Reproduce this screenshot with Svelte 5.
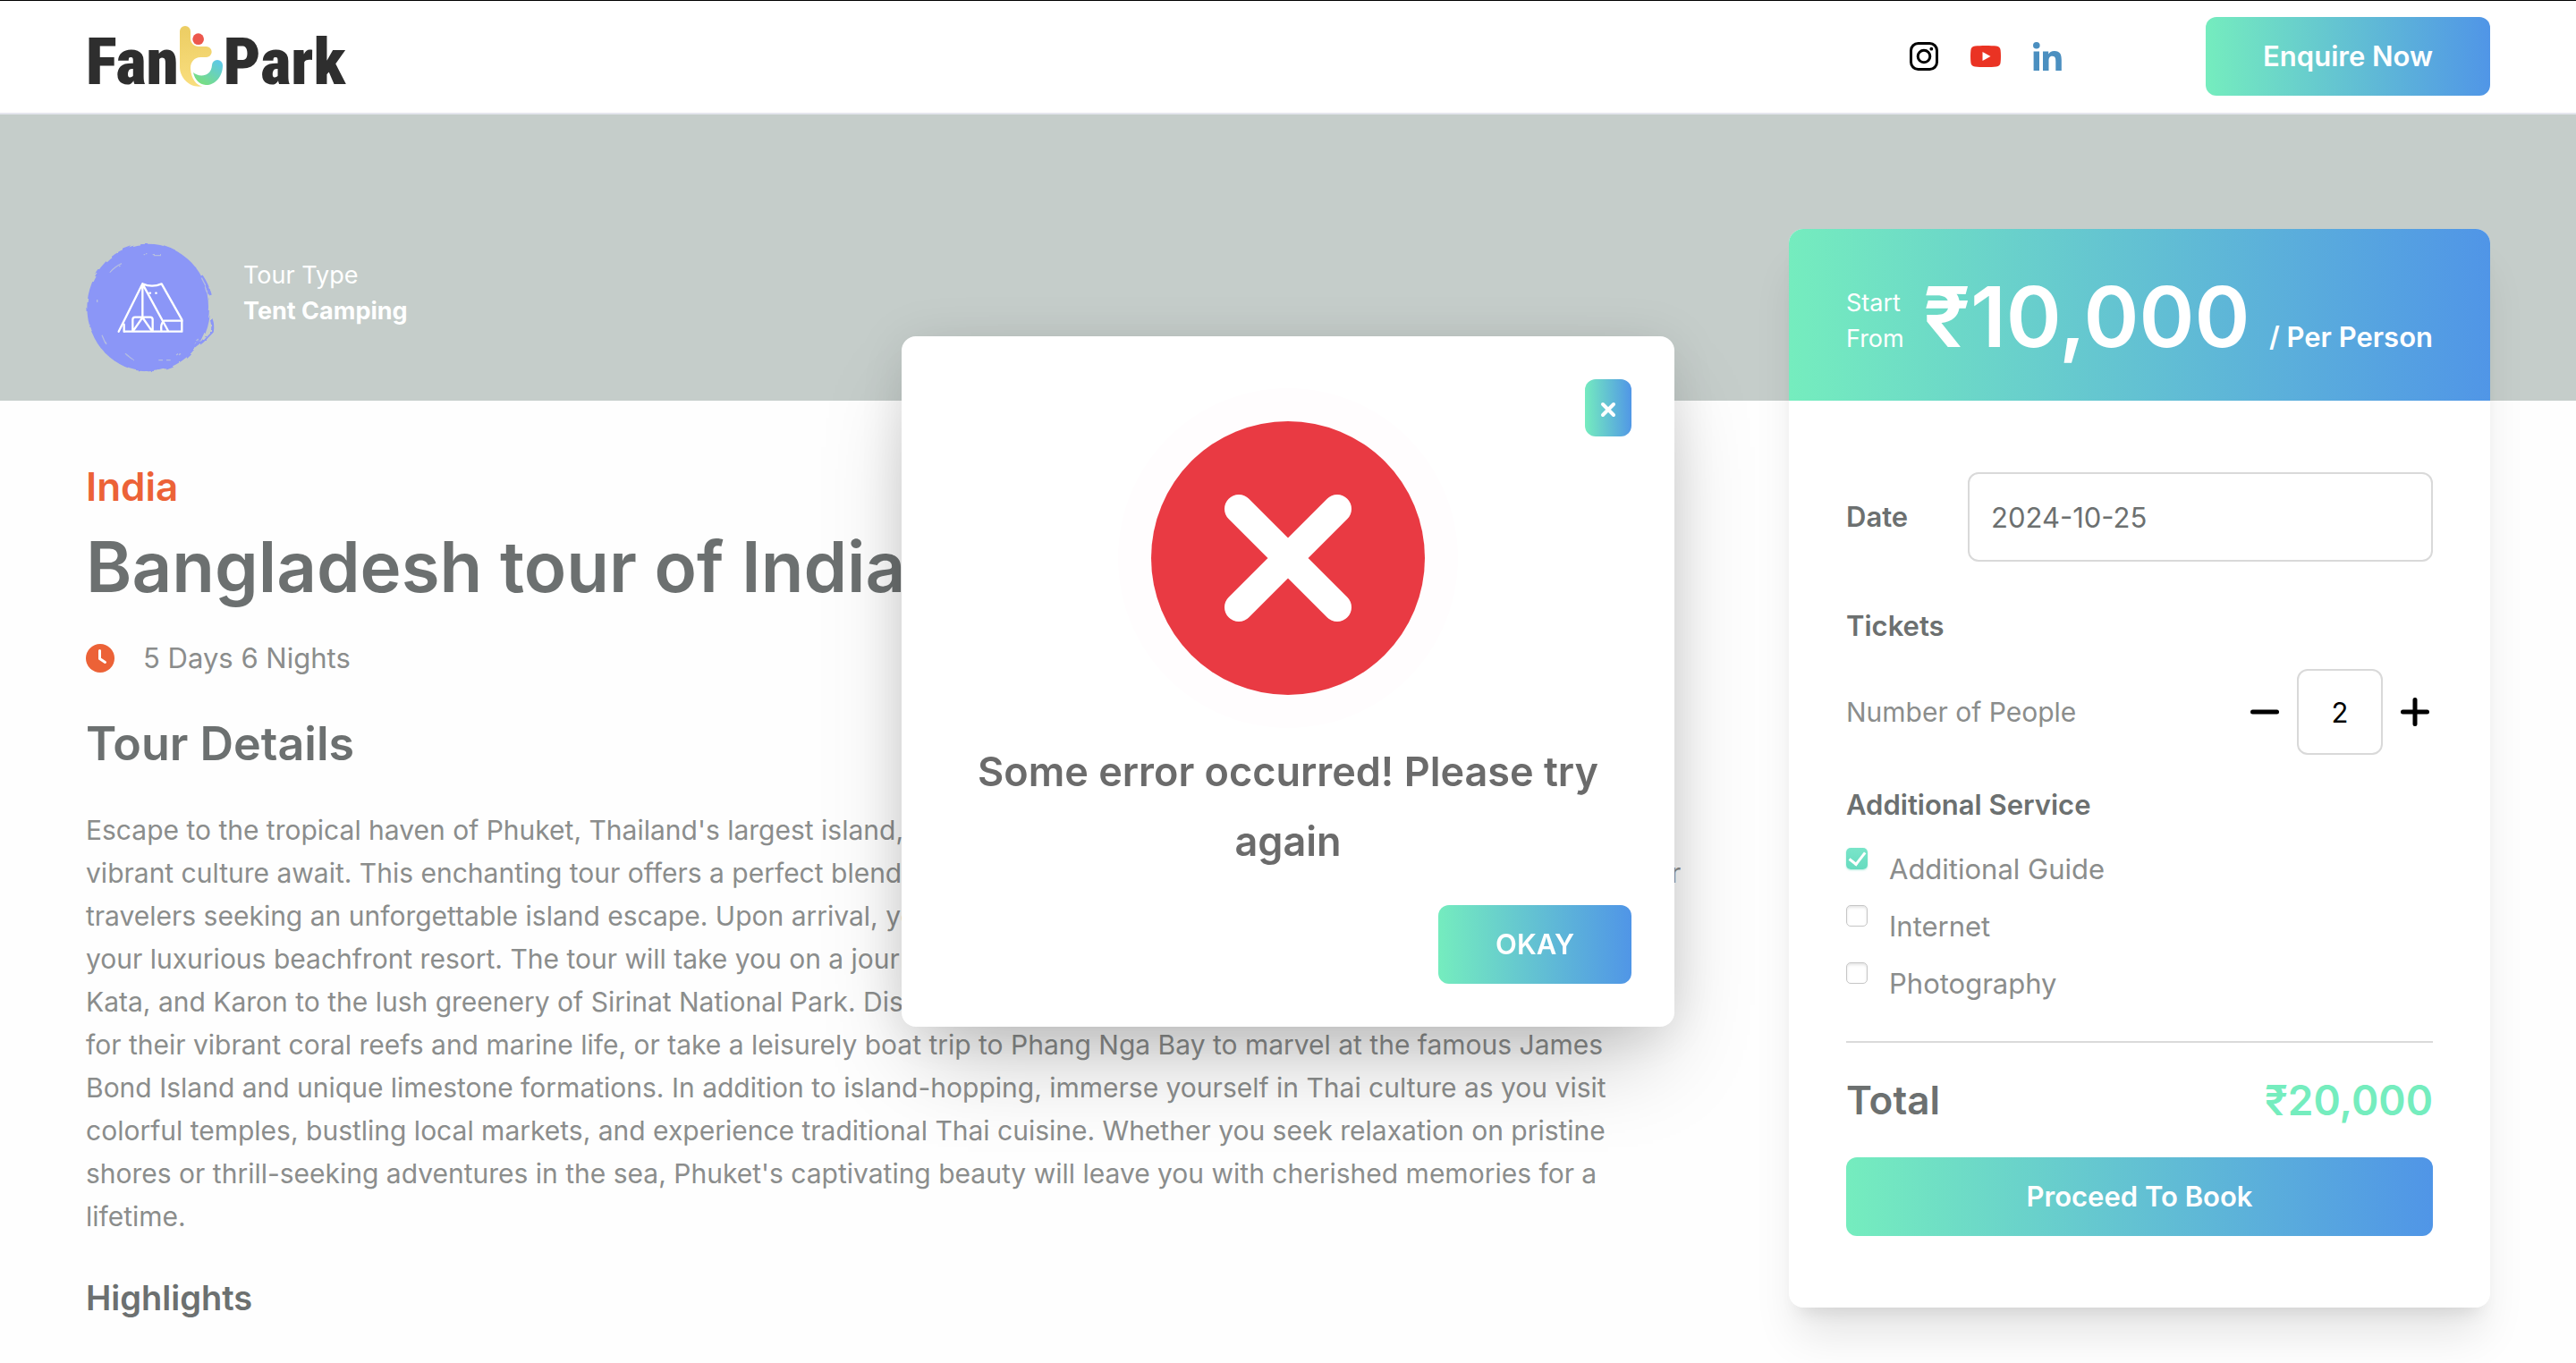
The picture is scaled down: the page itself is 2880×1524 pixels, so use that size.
<script>
  let open = $state(true);
  let date = $state('2024-10-25');
  let people = $state(2);
  let services = $state([
    { id: 'guide', name: 'Additional Guide', checked: true },
    { id: 'internet', name: 'Internet', checked: false },
    { id: 'photo', name: 'Photography', checked: false }
  ]);

  const price = 10000;
  let total = $derived('₹' + (price * Number(people)).toLocaleString('en-US'));

  const details = [
    "Escape to the tropical haven of Phuket, Thailand's largest island, where pristine beaches, clear waters, and",
    'vibrant culture await. This enchanting tour offers a perfect blend of relaxation with adventures, making it the ideal getaway for',
    "travelers seeking an unforgettable island escape. Upon arrival, you'll be warmly welcomed and transferred to",
    'your luxurious beachfront resort. The tour will take you on a journey from the sandy beaches of Patong,',
    'Kata, and Karon to the lush greenery of Sirinat National Park. Discover the nearby Phi Phi Islands, known',
    'for their vibrant coral reefs and marine life, or take a leisurely boat trip to Phang Nga Bay to marvel at the famous James',
    'Bond Island and unique limestone formations. In addition to island-hopping, immerse yourself in Thai culture as you visit',
    'colorful temples, bustling local markets, and experience traditional Thai cuisine. Whether you seek relaxation on pristine',
    "shores or thrill-seeking adventures in the sea, Phuket's captivating beauty will leave you with cherished memories for a",
    'lifetime.'
  ].join('\n');
</script>

<header class="topbar">
  <a class="logo" href="/" aria-label="FanTPark home">
    <span>Fan</span>
    <svg viewBox="420 84 150 210" width="50" height="70" aria-hidden="true">
      <defs>
        <linearGradient id="sun" x1="0" y1="0" x2="0" y2="1">
          <stop offset="0" stop-color="#eccd63" />
          <stop offset="1" stop-color="#f9de7e" />
        </linearGradient>
        <linearGradient id="sea" x1="1" y1="0" x2="0.2" y2="1">
          <stop offset="0" stop-color="#5ac6f2" />
          <stop offset="1" stop-color="#7be079" />
        </linearGradient>
      </defs>
      <path fill="url(#sun)" d="M423 105a18 18 0 0 1 36 0V130C460 146 471 156 486 156H512a18 18 0 0 1 0 36H492C472 193 458 208 459 230C461 262 478 287 499 289C458 297 423 262 423 225Z" />
      <circle cx="485" cy="131" r="19" fill="#ec574c" />
      <path fill="url(#sea)" d="M468 243C488 261 528 258 531 219a18 18 0 0 1 36 0C567 262 536 287 510 285C489 283 473 267 468 243Z" />
    </svg>
    <span>Park</span>
  </a>

  <nav class="social" aria-label="Social links">
    <a href="#instagram" aria-label="Instagram">
      <svg viewBox="0 0 32 32" width="32" height="32" fill="none" stroke="#000">
        <rect x="1.5" y="1.5" width="29" height="29" rx="8" stroke-width="3" />
        <circle cx="16" cy="16" r="6.8" stroke-width="3" />
        <circle cx="24.3" cy="7.7" r="1.9" fill="#000" stroke="none" />
      </svg>
    </a>
    <a href="#youtube" aria-label="YouTube">
      <svg viewBox="0 0 34 24" width="34" height="24">
        <path fill="#ea3323" d="M5 .6C11 -.2 23 -.2 29 .6C32 1 33.300 2.600 33.600 5C34.100 9 34.100 15 33.600 19C33.300 21.400 32 23 29 23.400C23 24.200 11 24.200 5 23.400C2 23 .7 21.400 .4 19C-.1 15 -.1 9 .4 5C.7 2.600 2 1 5 .6Z" />
        <path fill="#fff" d="M13.500 7v10l9-5z" />
      </svg>
    </a>
    <a href="#linkedin" aria-label="LinkedIn">
      <svg viewBox="0 0 32 32" width="32" height="32" fill="#4b8fc0">
        <circle cx="3.800" cy="3.800" r="3.800" />
        <path d="M.6 10.600H7V32H.6ZM11 10.600h6.200v3c1-1.900 3.300-3.500 6.600-3.500 6.600 0 8 4.200 8 10V32h-6.500V21.600c0-2.600-.1-5.800-3.700-5.800-3.600 0-4.100 2.700-4.100 5.600V32H11Z" />
      </svg>
    </a>
  </nav>
  <button class="btn">Enquire Now</button>
</header>

<section class="banner">
  <svg class="badge" viewBox="108 96 432 432" width="144" height="144" aria-hidden="true">
    <filter id="rough" x="-5%" y="-5%" width="110%" height="110%">
      <feTurbulence type="fractalNoise" baseFrequency="0.03" numOctaves="3" seed="4" />
      <feDisplacementMap in="SourceGraphic" scale="12" />
    </filter>
    <g filter="url(#rough)">
      <ellipse cx="317" cy="312" rx="205" ry="214" fill="#8b96f7" />
      <path d="M496 205Q516 235 526 270M528 350Q536 370 532 392L500 425L474 445" fill="none" stroke="#8b96f7" stroke-width="9" />
      <path d="M188 194Q206 174 228 164M302 134H316M332 134H360M240 466L266 486M352 488H366M378 488H392M414 474L426 466M146 285V294M162 404L174 432M496 212Q510 234 516 262M474 434L488 420" fill="none" stroke="#b4bde0" stroke-width="4" />
    </g>
    <g fill="none" stroke="#fff" stroke-width="7" stroke-linecap="round" stroke-linejoin="round">
      <path d="M298 232L218 392M298 232Q330 246 362 232L430 352V392H238M298 232L384 390M298 232V345" />
      <path d="M370 356H430M370 356Q358 366 361 390M236 368V392M265 390V352Q265 344 273 344H324Q332 344 332 352V390M298 345L268 388M298 345L328 388" />
      <path d="M322 263h2M343 263h1" />
    </g>
  </svg>
  <div class="tour-type">
    <span>Tour Type</span>
    <strong>Tent Camping</strong>
  </div>
</section>

<main class="content">
  <article class="tour">
    <p class="country">India</p>
    <h1>Bangladesh tour of India</h1>
    <p class="duration">
      <svg viewBox="0 0 32 32" width="32" height="32" aria-hidden="true">
        <circle cx="16" cy="16" r="16" fill="#ec6237" />
        <path d="M15.500 7.500V16.500L21.500 20.500" fill="none" stroke="#fff" stroke-width="3" stroke-linecap="round" stroke-linejoin="round" />
      </svg>
      5 Days 6 Nights
    </p>
    <h2>Tour Details</h2>
    <p class="details">{details}</p>
    <h3>Highlights</h3>
  </article>

  <aside class="card">
    <div class="card-head">
      <span class="from">Start<br />From</span>
      <span class="price">₹10,000</span>
      <span class="per">/ Per Person</span>
    </div>
    <form class="card-body" onsubmit={(e) => e.preventDefault()}>
      <div class="date-row">
        <label for="date">Date</label>
        <input id="date" type="text" bind:value={date} />
      </div>

      <h4>Tickets</h4>
      <div class="people-row">
        <label for="people">Number of People</label>
        <div class="stepper">
          <button type="button" aria-label="Fewer people" onclick={() => (people = Math.max(1, people - 1))}>
            <svg viewBox="0 0 32 32" width="32" height="32"><path d="M2.500 16H29.500" /></svg>
          </button>
          <input id="people" type="text" inputmode="numeric" bind:value={people} />
          <button type="button" aria-label="More people" onclick={() => (people = Number(people) + 1)}>
            <svg viewBox="0 0 32 32" width="32" height="32"><path d="M2.500 16H29.500M16 2.500V29.500" /></svg>
          </button>
        </div>
      </div>

      <h4 class="services-title">Additional Service</h4>
      <div class="services">
        {#each services as s (s.id)}
          <div class="service">
            <input id={s.id} type="checkbox" bind:checked={s.checked} />
            <label for={s.id}>{s.name}</label>
          </div>
        {/each}
      </div>

      <div class="total">
        <span>Total</span>
        <span class="sum">{total}</span>
      </div>
      <button class="btn wide">Proceed To Book</button>
    </form>
  </aside>
</main>

{#if open}
  <div class="overlay">
    <div class="modal" role="alertdialog" aria-modal="true" aria-labelledby="modal-text">
      <button class="close" aria-label="Close" onclick={() => (open = false)}>
        <svg viewBox="0 0 18 18" width="18" height="18"><path d="M3 3L15 15M15 3L3 15" /></svg>
      </button>
      <svg class="error" viewBox="0 0 380 380" width="380" height="380" aria-hidden="true">
        <circle cx="190" cy="190" r="190" fill="#fffdfe" />
        <circle cx="190" cy="190" r="153" fill="#e93a43" />
        <path d="M135 135L245 245M245 135L135 245" stroke="#fff" stroke-width="32" stroke-linecap="round" />
      </svg>
      <p id="modal-text">Some error occurred! Please try again</p>
      <button class="btn okay" onclick={() => (open = false)}>OKAY</button>
    </div>
  </div>
{/if}

<style>
  :global(body) {
    min-height: 100vh;
    margin: 0;
    background: #fefefe;
    color: #8b8d8c;
    font: 400 30px/48px Inter, "Liberation Sans", sans-serif;
  }
  :global(*) { box-sizing: border-box; }
  h1, h2, h3, h4, p { margin: 0; }
  h1, h2, h3, h4 { color: #6c7070; font-weight: 600; }
  svg { display: block; flex: none; }
  button, input { font: inherit; margin: 0; }
  button { border: 0; padding: 0; background: none; cursor: pointer; }

  .btn {
    height: 88px;
    padding: 0 64px;
    border-radius: 12px;
    background: linear-gradient(88deg, #75edbe, #5095e7);
    color: #fff;
    font-size: 31px;
    font-weight: 600;
  }

  .topbar {
    display: flex;
    align-items: center;
    height: 128px;
    padding: 0 96px;
    border-bottom: 2px solid #e5e6ee;
    background: #fff;
    box-shadow: inset 0 1px #000;
  }
  .logo {
    display: flex;
    align-items: center;
    margin-right: auto;
    color: #2e2e2e;
    text-decoration: none;
    font: 900 73px/78px "Roboto Condensed", Roboto, sans-serif;
  }
  .logo span { padding-top: 12px; }
  .social { display: flex; align-items: center; gap: 36px; margin-right: 161px; }

  .banner {
    display: flex;
    gap: 32px;
    height: 320px;
    padding: 144px 96px 0;
    background: #c5cdca;
    color: #fff;
  }
  .tour-type {
    display: flex;
    flex-direction: column;
    padding-top: 16px;
    font-size: 27px;
    line-height: 40px;
  }
  .tour-type strong { font-weight: 700; }

  .content {
    display: grid;
    grid-template-columns: 17fr 7fr;
    align-items: start;
    padding: 0 96px 48px;
  }
  .tour { min-width: 0; padding-top: 72px; }
  .country { color: #ec6237; font-size: 44px; font-weight: 600; }
  h1 { margin-top: 18px; font-size: 78px; line-height: 96px; }
  .duration { display: flex; align-items: center; gap: 32px; margin-top: 30px; font-size: 31px; }
  h2 { margin-top: 40px; font-size: 52px; line-height: 64px; }
  .details { margin-top: 40px; white-space: pre-line; }
  h3 { margin-top: 43px; font-size: 38px; line-height: 48px; }

  .card {
    margin-top: -192px;
    border-radius: 16px;
    background: #fff;
    box-shadow: 0 40px 50px -10px rgba(0, 0, 0, 0.1), 0 16px 20px -12px rgba(0, 0, 0, 0.1);
  }
  .card-head {
    display: flex;
    align-items: last baseline;
    justify-content: space-between;
    align-content: center;
    flex-wrap: wrap;
    height: 192px;
    padding: 4px 64px 0;
    border-radius: 16px 16px 0 0;
    background: linear-gradient(88deg, #75edbe, #5095e7);
    color: #fff;
    white-space: nowrap;
  }
  .from { font-size: 27px; line-height: 40px; }
  .price { font-size: 94px; font-weight: 600; line-height: 104px; }
  .per { font-size: 31px; font-weight: 600; }

  .card-body { padding: 80px 64px; }
  .date-row { display: grid; grid-template-columns: 136px 1fr; align-items: center; }
  .date-row label { color: #6c7070; font-size: 31px; font-weight: 600; }
  .date-row input {
    width: 100%;
    height: 100px;
    padding: 0 24px;
    border: 2px solid #d9d9d9;
    border-radius: 12px;
    background: #fff;
    color: #6c7070;
    font-size: 31px;
  }
  h4 { margin-top: 48px; font-size: 31px; line-height: 48px; }
  .people-row { display: flex; align-items: center; justify-content: space-between; margin-top: 24px; }
  .stepper { display: flex; align-items: center; gap: 20px; padding-right: 4px; }
  .stepper path { stroke: #000; stroke-width: 5; stroke-linecap: round; }
  .stepper input {
    width: 96px;
    height: 96px;
    padding: 0;
    border: 2px solid #d9d9d9;
    border-radius: 12px;
    background: #fff;
    color: #000;
    font-size: 31px;
    text-align: center;
  }
  .services-title { margin-top: 32px; }
  .services { display: grid; gap: 16px; margin-top: 24px; font-size: 31px; }
  .service { display: flex; align-items: flex-start; gap: 24px; }
  .service input {
    appearance: none;
    display: grid;
    place-items: center;
    width: 24px;
    height: 24px;
    border: 1px solid #c6c6c6;
    border-radius: 5px;
    background: #fff;
    box-shadow: inset 0 2px 3px rgba(0, 0, 0, 0.1);
  }
  .service input:checked {
    border: 0;
    background: linear-gradient(#79e5c9, #66dbbf);
    box-shadow: 0 1px 2px rgba(102, 219, 191, 0.5);
  }
  .service input:checked::after {
    content: "";
    width: 8px;
    height: 15px;
    margin-bottom: 4px;
    border: solid #fff;
    border-width: 0 3px 3px 0;
    transform: rotate(38deg);
  }
  .total {
    display: flex;
    justify-content: space-between;
    margin-top: 40px;
    padding: 32px 0;
    border-top: 2px solid #dadada;
    color: #6c7070;
    font-size: 44px;
    font-weight: 600;
    line-height: 64px;
  }
  .sum { color: #75edbe; font-size: 46px; }
  .wide { display: block; width: 100%; }

  .overlay {
    position: fixed;
    inset: 0;
    display: flex;
    align-items: center;
    justify-content: center;
  }
  .modal {
    position: relative;
    display: flex;
    flex-direction: column;
    align-items: center;
    width: 30%;
    padding: 58px 48px 48px;
    border-radius: 16px;
    background: #fff;
    box-shadow: 0 50px 100px -24px rgba(0, 0, 0, 0.25), 0 8px 60px rgba(0, 0, 0, 0.1);
  }
  .close {
    position: absolute;
    top: 48px;
    right: 48px;
    display: grid;
    place-items: center;
    width: 52px;
    height: 64px;
    padding-top: 4px;
    border-radius: 12px;
    background: linear-gradient(88deg, #75edbe, #5095e7);
  }
  .close path { stroke: #fff; stroke-width: 4; stroke-linecap: round; }
  .modal p {
    margin: 10px 0 32px;
    color: #6b6b6b;
    font-size: 45px;
    font-weight: 600;
    line-height: 78px;
    text-align: center;
  }
  .okay { align-self: flex-end; }
</style>
